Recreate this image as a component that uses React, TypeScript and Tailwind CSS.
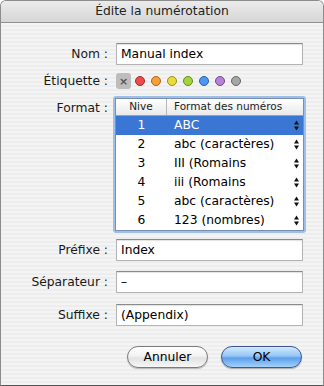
import React from 'react';

const font = { fontFamily: '"DejaVu Sans", "Liberation Sans", sans-serif' };

const rows = [
  { n: '1', f: 'ABC' },
  { n: '2', f: 'abc (caractères)' },
  { n: '3', f: 'III (Romains' },
  { n: '4', f: 'iii (Romains' },
  { n: '5', f: 'abc (caractères)' },
  { n: '6', f: '123 (nombres)' },
];

const dots = [
  ['#f04b4b', '#a32a2a'],
  ['#f6a03a', '#a8661c'],
  ['#eadb3c', '#9c8f1c'],
  ['#a3d43d', '#628a1c'],
  ['#4b98f4', '#2a5fa3'],
  ['#b682d8', '#74478f'],
  ['#a6a6a6', '#666666'],
];

function Stepper() {
  return (
    <svg width="7" height="11" viewBox="0 0 7 11" className="shrink-0">
      <path d="M3.5 0.5 L6 4.5 L1 4.5 Z" fill="#111" />
      <path d="M3.5 10.5 L6 6.5 L1 6.5 Z" fill="#111" />
    </svg>
  );
}

function Field({ label, value }: { label: string; value: string }) {
  return (
    <div className="flex items-center">
      <div className="w-[109px] text-right pr-[2px] text-[#1a1a1a]">{label}</div>
      <div className="ml-[6px] w-[187px] h-[22px] bg-white border border-[#b4b4b4] border-t-[#8a8a8a] shadow-[inset_0_1px_1px_rgba(0,0,0,0.12)] flex items-center pl-[4px] text-black">
        {value}
      </div>
    </div>
  );
}

export default function App() {
  return (
    <div className="w-[324px] h-[386px] bg-white" style={font}>
      <div className="w-[324px] h-[386px] rounded-t-[6px] border border-[#8c8c8c] border-b-[#555] overflow-hidden flex flex-col text-[12.3px] bg-[repeating-linear-gradient(to_bottom,#ededed_0px,#ededed_2px,#f4f4f4_2px,#f4f4f4_4px)]">
        {/* title bar */}
        <div className="h-[22px] shrink-0 flex items-center justify-center border-b border-[#8f8f8f] bg-[linear-gradient(to_bottom,#ebebeb,#d6d6d6)] text-[#222]">
          Édite la numérotation
        </div>

        <div className="flex flex-col pt-[20px]">
          <Field label="Nom :" value="Manual index" />

          {/* Étiquette */}
          <div className="flex items-center mt-[8px] h-[16px]">
            <div className="w-[109px] text-right pr-[2px] text-[#1a1a1a]">Étiquette :</div>
            <div className="ml-[6px] flex items-center">
              <div className="w-[15px] h-[16px] rounded-[3px] bg-[#bdbdbd] flex items-center justify-center text-[#555] text-[11px] font-bold leading-none">
                ×
              </div>
              <div className="flex items-center gap-[6px] ml-[4px]">
                {dots.map(([c, b], i) => (
                  <div
                    key={i}
                    className="w-[10px] h-[10px] rounded-full border"
                    style={{ background: c, borderColor: b }}
                  />
                ))}
              </div>
            </div>
          </div>

          {/* Format table */}
          <div className="flex mt-[7px]">
            <div className="w-[109px] text-right pr-[2px] pt-[3px] text-[#1a1a1a]">Format :</div>
            <div className="ml-[3px] p-[2px] rounded-[3px] bg-[#9fc0e6]">
              <div className="w-[189px] border border-[#7a8fb0] bg-white">
                <div className="flex h-[17px] border-b border-[#a0a0a0] bg-[linear-gradient(to_bottom,#ffffff,#e9e9e9)] text-[10.5px] text-[#222] items-center">
                  <div className="w-[51px] text-center border-r border-[#b8b8b8] h-full flex items-center justify-center">Nive</div>
                  <div className="flex-1 pl-[7px]">Format des numéros</div>
                </div>
                {rows.map((r, i) => (
                  <div
                    key={r.n}
                    className={`flex items-center h-[19px] ${i === 0 ? 'bg-[#3a76d4] text-white' : 'text-black'}`}
                  >
                    <div className="w-[51px] text-center">{r.n}</div>
                    <div className="flex-1 pl-[7px]">{r.f}</div>
                    <div className="pr-[3px]">
                      <Stepper />
                    </div>
                  </div>
                ))}
              </div>
            </div>
          </div>

          <div className="mt-[6px]">
            <Field label="Préfixe :" value="Index" />
          </div>
          <div className="mt-[10px]">
            <Field label="Séparateur :" value="–" />
          </div>
          <div className="mt-[11px]">
            <Field label="Suffixe :" value="(Appendix)" />
          </div>

          {/* buttons */}
          <div className="flex justify-end gap-[13px] mt-[20px] pr-[21px]">
            <button className="w-[81px] h-[22px] rounded-full border border-[#7c7c7c] bg-[linear-gradient(to_bottom,#ffffff_0%,#f2f2f2_45%,#e2e2e2_55%,#f7f7f7_100%)] shadow-[0_1px_1px_rgba(0,0,0,0.25)] text-black">
              Annuler
            </button>
            <button className="w-[81px] h-[22px] rounded-full border border-[#3b5894] bg-[linear-gradient(to_bottom,#d2e8fc_0%,#95c6f5_45%,#5b9fec_55%,#a4d2fa_100%)] shadow-[0_1px_1px_rgba(0,0,0,0.3)] text-black">
              OK
            </button>
          </div>
        </div>
      </div>
    </div>
  );
}
